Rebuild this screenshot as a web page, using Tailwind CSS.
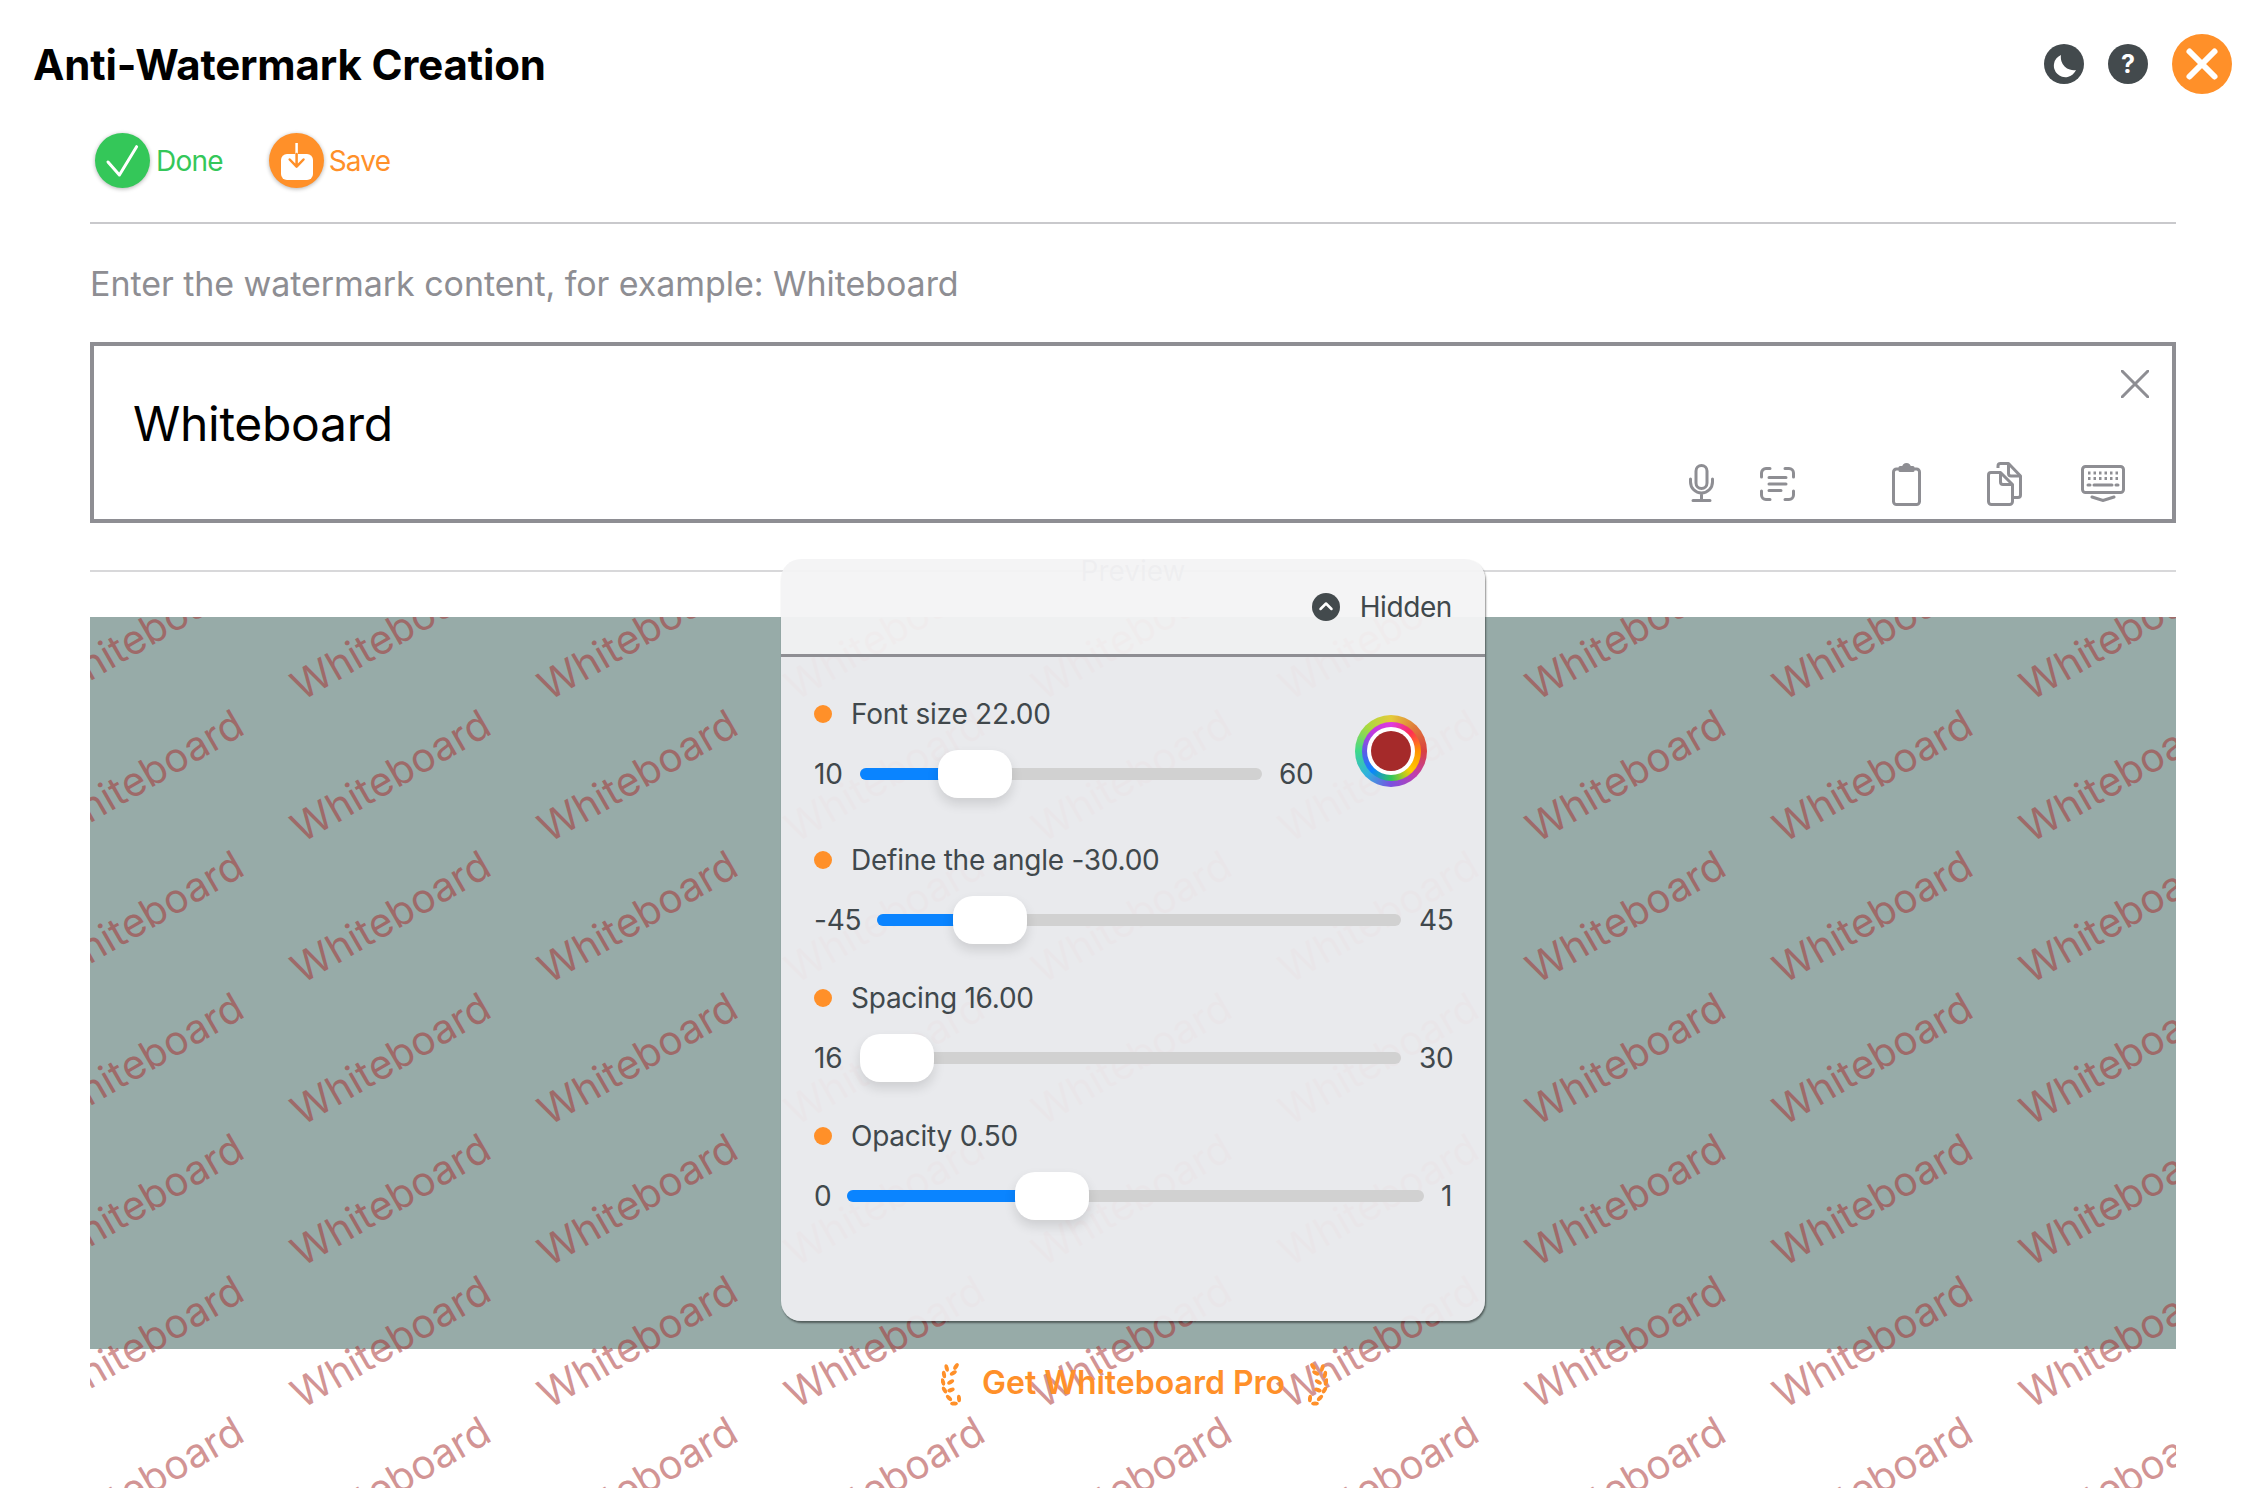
<!DOCTYPE html>
<html lang="en">
<head>
    <meta charset="UTF-8">
    <meta name="viewport" content="width=device-width, initial-scale=1.0">
    <title>Anti-Watermark Creation</title>
    <script src="https://cdn.jsdelivr.net/npm/@tailwindcss/browser@4"></script>
</head>
<body class="bg-white font-['Inter',sans-serif] overflow-hidden">
<div class="w-[2266px] h-[1488px] overflow-hidden">

    <!-- Header -->
    <header class="flex items-center justify-between h-[128px] pl-[33px] pr-[34px]">
        <h1 class="text-[42px] font-bold text-black tracking-[-0.15px]">Anti-Watermark Creation</h1>
        <div class="flex items-center">
            <button class="w-[40px] h-[40px] rounded-full bg-[#434a4d]">
                <svg viewBox="0 0 40 40" class="w-[40px] h-[40px]"><path d="M17 11A11.5 11.5 0 1 0 32 26A13 13 0 0 1 17 11Z" fill="#fff"/></svg>
            </button>
            <button class="w-[40px] h-[40px] ml-[24px] rounded-full bg-[#434a4d] text-white text-[25px] font-bold leading-[40px]">?</button>
            <button class="w-[60px] h-[60px] ml-[24px] rounded-full bg-[#ff9029]">
                <svg viewBox="0 0 60 60" class="w-[60px] h-[60px]"><path d="M17.5 17.5L42.5 42.5M42.5 17.5L17.5 42.5" stroke="#fff" stroke-width="6" stroke-linecap="round"/></svg>
            </button>
        </div>
    </header>

    <!-- Toolbar -->
    <div class="flex items-center h-[65px] pl-[95px]">
        <div class="flex items-center">
            <svg viewBox="0 0 55 55" class="w-[55px] h-[55px] rounded-full bg-[#34c759] shadow-[0_1px_4px_rgba(0,0,0,0.3)]"><path d="M13 29L24.4 42L41.6 13.7" fill="none" stroke="#fff" stroke-width="3" stroke-linecap="round" stroke-linejoin="round"/></svg>
            <span class="ml-[6px] text-[28px] tracking-[-0.8px] text-[#34c759]">Done</span>
        </div>
        <div class="flex items-center ml-[46px]">
            <svg viewBox="0 0 55 55" class="w-[55px] h-[55px] rounded-full bg-[#ff9029] shadow-[0_1px_4px_rgba(0,0,0,0.3)]">
                <rect x="12" y="21" width="32" height="26" rx="6" fill="#fff"/>
                <path d="M27.6 10V21" stroke="#fff" stroke-width="2.5"/>
                <path d="M27.6 21V33M20.7 26.5L27.6 33.7L34.5 26.5" fill="none" stroke="#ff9029" stroke-width="2.5" stroke-linecap="round" stroke-linejoin="round"/>
            </svg>
            <span class="ml-[5px] text-[28px] tracking-[-0.8px] text-[#ff9029]">Save</span>
        </div>
    </div>

    <main class="relative mx-[90px] pt-[29px]">
        <div class="h-[2px] bg-[#c9c9cc]"></div>
        <p class="mt-[38px] text-[34px] leading-[44px] tracking-[-0.06px] text-[#8e8e93]">Enter the watermark content, for example: Whiteboard</p>

        <!-- Text input -->
        <div class="relative h-[181px] mt-[36px] border-[4px] border-[#8e8e93]">
            <div class="pl-[39px] pt-[43px] text-[48px] leading-[70px] tracking-[-0.3px] text-black">Whiteboard</div>
            <svg viewBox="0 0 28 28" class="absolute right-[23px] top-[24px] w-[28px] h-[28px]"><path d="M1 1L27 27M27 1L1 27" stroke="#8e8e93" stroke-width="3" stroke-linecap="round"/></svg>
            <div class="absolute left-[1595px] top-[115px] flex items-start">
                <!-- mic -->
                <svg viewBox="0 0 25 38" class="w-[25px] h-[38px] mt-[3px]" fill="none" stroke="#8e8e93" stroke-width="3" stroke-linecap="round"><rect x="7" y="1.5" width="11" height="23" rx="5.5"/><path d="M1.5 15V18A11 11 0 0 0 23.5 18V15M12.5 29V36M4 36.5H21"/></svg>
                <!-- scan text -->
                <svg viewBox="0 0 35 34" class="w-[35px] h-[34px] ml-[46px] mt-[6px]" fill="none" stroke="#8e8e93" stroke-width="3" stroke-linecap="round"><path d="M1.5 10V6A4.5 4.5 0 0 1 6 1.5H10M25 1.5H29A4.5 4.5 0 0 1 33.5 6V10M33.5 24V28A4.5 4.5 0 0 1 29 32.5H25M10 32.5H6A4.5 4.5 0 0 1 1.5 28V24M9 10.5H26M9 17H26M9 23.5H21"/></svg>
                <!-- clipboard -->
                <svg viewBox="0 0 29 43" class="w-[29px] h-[43px] ml-[97px] mt-[2px]" fill="none" stroke="#8e8e93" stroke-width="3" stroke-linejoin="round"><path d="M8 6H4.5A3 3 0 0 0 1.5 9V38.5A3 3 0 0 0 4.5 41.5H24.5A3 3 0 0 0 27.5 38.5V9A3 3 0 0 0 24.5 6H21"/><path d="M8 7.5H21V4.5H17.5A3 3 0 0 0 11.5 4.5H8Z" fill="#8e8e93"/></svg>
                <!-- copy -->
                <svg viewBox="0 0 35 44" class="w-[35px] h-[44px] ml-[66px] mt-[1px]" fill="none" stroke="#8e8e93" stroke-width="3" stroke-linejoin="round"><path d="M11 6V4A2.5 2.5 0 0 1 13.5 1.5H21.5L33.5 14V33A2.5 2.5 0 0 1 31 35.5H27"/><path d="M21.5 1.5V11.5A2.5 2.5 0 0 0 24 14H33.5"/><path d="M4 10.5H13.5L25.5 22.5V39.5A3 3 0 0 1 22.5 42.5H4.5A3 3 0 0 1 1.5 39.5V13A2.5 2.5 0 0 1 4 10.5Z"/><path d="M13.5 10.5V20A2.5 2.5 0 0 0 16 22.5H25.5"/></svg>
                <!-- keyboard -->
                <svg viewBox="0 0 44 37" class="w-[44px] h-[37px] ml-[59px] mt-[4px]" fill="none" stroke="#8e8e93" stroke-width="3" stroke-linecap="round"><rect x="1.5" y="1.5" width="41" height="26" rx="3"/><path d="M7 8H37M7 13.500H37" stroke-dasharray="2.500 3" stroke-linecap="butt"/><path d="M7 20H9M13 20H31M35 20H37"/><path d="M11 32L22 35.5L33 32"/></svg>
            </div>
        </div>

        <div class="h-[2px] mt-[47px] bg-[#d8d8da]"></div>
        <p class="absolute left-0 right-0 top-[357px] text-center text-[28px] text-[#8e8e93]">Preview</p>
        <div class="h-[732px] mt-[45px] bg-[#97aba8]"></div>

        <!-- Get Pro -->
        <div class="absolute left-[851px] top-[1169px] flex items-center z-20">
            <svg viewBox="0 0 21 43" class="w-[21px] h-[43px]" fill="#ff9029"><ellipse cx="15" cy="3.5" rx="2" ry="3.8" transform="rotate(35 15 3.5)"/><ellipse cx="5.7" cy="5" rx="2" ry="3.8" transform="rotate(-15 5.7 5)"/><ellipse cx="12.3" cy="10" rx="2" ry="3.8" transform="rotate(60 12.3 10)"/><ellipse cx="3" cy="11.5" rx="2" ry="3.8" transform="rotate(-10 3 11.5)"/><ellipse cx="9.7" cy="19" rx="2" ry="3.8" transform="rotate(60 9.7 19)"/><ellipse cx="2" cy="19" rx="2" ry="3.8" transform="rotate(-15 2 19)"/><ellipse cx="10" cy="27" rx="2" ry="3.8" transform="rotate(70 10 27)"/><ellipse cx="3.5" cy="27" rx="2" ry="3.8" transform="rotate(-30 3.5 27)"/><ellipse cx="18" cy="35.5" rx="2" ry="3.8" transform="rotate(-5 18 35.5)"/><ellipse cx="8" cy="35" rx="2" ry="3.8" transform="rotate(-45 8 35)"/><ellipse cx="13" cy="40.5" rx="3.8" ry="2"/></svg>
            <span class="ml-[20px] -mt-[3px] text-[32px] font-semibold text-[#ff9029]">Get Whiteboard Pro</span>
            <svg viewBox="0 0 21 43" class="w-[21px] h-[43px] ml-[22px] -scale-x-100" fill="#ff9029"><ellipse cx="15" cy="3.5" rx="2" ry="3.8" transform="rotate(35 15 3.5)"/><ellipse cx="5.7" cy="5" rx="2" ry="3.8" transform="rotate(-15 5.7 5)"/><ellipse cx="12.3" cy="10" rx="2" ry="3.8" transform="rotate(60 12.3 10)"/><ellipse cx="3" cy="11.5" rx="2" ry="3.8" transform="rotate(-10 3 11.5)"/><ellipse cx="9.7" cy="19" rx="2" ry="3.8" transform="rotate(60 9.7 19)"/><ellipse cx="2" cy="19" rx="2" ry="3.8" transform="rotate(-15 2 19)"/><ellipse cx="10" cy="27" rx="2" ry="3.8" transform="rotate(70 10 27)"/><ellipse cx="3.5" cy="27" rx="2" ry="3.8" transform="rotate(-30 3.5 27)"/><ellipse cx="18" cy="35.5" rx="2" ry="3.8" transform="rotate(-5 18 35.5)"/><ellipse cx="8" cy="35" rx="2" ry="3.8" transform="rotate(-45 8 35)"/><ellipse cx="13" cy="40.5" rx="3.8" ry="2"/></svg>
        </div>

        <!-- Watermark layer, filled by the script below -->
        <div class="absolute left-0 right-0 top-[424px] h-[871px] overflow-hidden z-10 pointer-events-none">
            <div id="marks" class="absolute left-[-316.5px] top-[-53.25px] grid grid-cols-[repeat(11,247px)] auto-rows-[141.5px]"></div>
        </div>

        <!-- Settings panel -->
        <section class="absolute left-[691px] top-[366px] w-[704px] h-[762px] z-30 rounded-[20px] overflow-hidden shadow-[1px_2px_2px_rgba(0,0,0,0.45)] text-[#40484c] text-[28px] tracking-[-0.25px]">
            <div class="flex items-center justify-end h-[98px] pr-[33px] border-b-[3px] border-[#8e8e93] bg-[#f3f3f4]/95">
                <svg viewBox="0 0 28 28" class="w-[28px] h-[28px] rounded-full bg-[#434a4d]"><path d="M8.5 16L14 10.5L19.5 16" fill="none" stroke="#fff" stroke-width="2.5" stroke-linecap="round" stroke-linejoin="round"/></svg>
                <span class="ml-[20px] tracking-[-0.4px]">Hidden</span>
            </div>
            <div class="relative h-[664px] px-[33px] pt-[39px] bg-[#ededf0]/95">
                <!-- Color picker -->
                <div class="absolute left-[574px] top-[58px] w-[72px] h-[72px] rounded-full flex items-center justify-center bg-[conic-gradient(from_0deg,#e4cb3a,#e07a3a,#d9403f,#c03fb0,#7a4fe0,#2fb0e0,#3fd98a,#a8d93f,#e4cb3a)]">
                    <div class="w-[59px] h-[59px] rounded-full flex items-center justify-center bg-[conic-gradient(from_0deg,#e03adf,#ff2d55,#ff9500,#ffcc00,#34c759,#0a84ff,#5e5ce6,#c03adf,#e03adf)]">
                        <div class="w-[48px] h-[48px] rounded-full bg-white flex items-center justify-center">
                            <div class="w-[40px] h-[40px] rounded-full bg-[#a52a2a]"></div>
                        </div>
                    </div>
                </div>

                <div class="flex items-center h-[36px]">
                    <span class="w-[18px] h-[18px] rounded-full bg-[#ff9029]"></span>
                    <span class="ml-[19px]">Font size 22.00</span>
                </div>
                <div class="flex items-center h-[48px] mt-[18px] w-[498px]">
                    <span class="w-[29px]">10</span>
                    <div class="relative flex-1 h-[12px] mx-[17px] rounded-full bg-[#d1d1d1]">
                        <div class="absolute left-0 top-0 h-[12px] w-[100px] rounded-l-full bg-[#0a84ff]"></div>
                        <div class="absolute left-[78px] top-[-18px] w-[74px] h-[48px] rounded-[20px] bg-white shadow-[0_6px_12px_rgba(0,0,0,0.12)]"></div>
                    </div>
                    <span class="w-[33px] pr-[1px] text-right">60</span>
                </div>

                <div class="flex items-center h-[36px] mt-[44px]">
                    <span class="w-[18px] h-[18px] rounded-full bg-[#ff9029]"></span>
                    <span class="ml-[19px]">Define the angle -30.00</span>
                </div>
                <div class="flex items-center h-[48px] mt-[18px]">
                    <span class="w-[46px]">-45</span>
                    <div class="relative flex-1 h-[12px] ml-[17px] mr-[18px] rounded-full bg-[#d1d1d1]">
                        <div class="absolute left-0 top-0 h-[12px] w-[100px] rounded-l-full bg-[#0a84ff]"></div>
                        <div class="absolute left-[76px] top-[-18px] w-[74px] h-[48px] rounded-[20px] bg-white shadow-[0_6px_12px_rgba(0,0,0,0.12)]"></div>
                    </div>
                    <span class="w-[33px] pr-[1px] text-right">45</span>
                </div>

                <div class="flex items-center h-[36px] mt-[36px]">
                    <span class="w-[18px] h-[18px] rounded-full bg-[#ff9029]"></span>
                    <span class="ml-[19px]">Spacing 16.00</span>
                </div>
                <div class="flex items-center h-[48px] mt-[18px]">
                    <span class="w-[29px]">16</span>
                    <div class="relative flex-1 h-[12px] ml-[17px] mr-[18px] rounded-full bg-[#d1d1d1]">
                        <div class="absolute left-0 top-[-18px] w-[74px] h-[48px] rounded-[20px] bg-white shadow-[0_6px_12px_rgba(0,0,0,0.12)]"></div>
                    </div>
                    <span class="w-[33px] pr-[1px] text-right">30</span>
                </div>

                <div class="flex items-center h-[36px] mt-[36px]">
                    <span class="w-[18px] h-[18px] rounded-full bg-[#ff9029]"></span>
                    <span class="ml-[19px]">Opacity 0.50</span>
                </div>
                <div class="flex items-center h-[48px] mt-[18px]">
                    <span class="w-[16px]">0</span>
                    <div class="relative flex-1 h-[12px] mx-[17px] rounded-full bg-[#d1d1d1]">
                        <div class="absolute left-0 top-0 h-[12px] w-[190px] rounded-l-full bg-[#0a84ff]"></div>
                        <div class="absolute left-[168px] top-[-18px] w-[74px] h-[48px] rounded-[20px] bg-white shadow-[0_6px_12px_rgba(0,0,0,0.12)]"></div>
                    </div>
                    <span class="w-[11px] text-right">1</span>
                </div>
            </div>
        </section>
    </main>
</div>

<script>
    // 11 columns x 9 rows of the watermark word
    const marks = document.getElementById('marks');
    marks.innerHTML = '<div class="flex items-center justify-center"><span class="whitespace-nowrap font-[\'Liberation_Sans\',sans-serif] text-[40.5px] leading-none text-[#a52a2a]/50 -rotate-30">Whiteboard</span></div>'.repeat(99);
</script>
</body>
</html>
